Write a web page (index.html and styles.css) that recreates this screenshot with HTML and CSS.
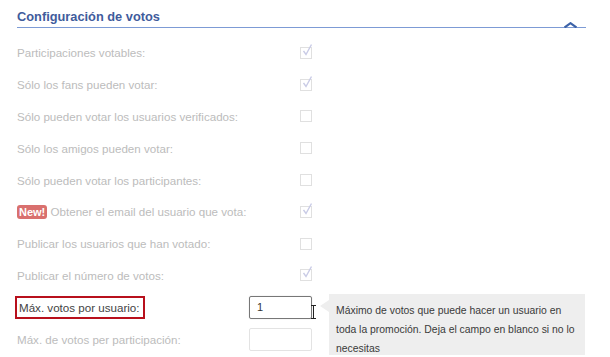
FILE: index.html
```html
<!DOCTYPE html>
<html lang="es">
<head>
    <meta charset="UTF-8">
    <title>Configuración de votos</title>
    <link rel="stylesheet" href="styles.css">
</head>
<body>
    <div class="panel">
        <div class="panel-head">
            <h2 class="panel-title">Configuración de votos</h2>
            <svg class="chevron" width="13" height="6" viewBox="0 0 13 6">
                <path d="M0.5 5.5 L6.5 1.2 L12.5 5.5" fill="none" stroke="#3d63a8" stroke-width="2.2"/>
            </svg>
        </div>

        <div class="rows">
            <div class="row"><span class="label">Participaciones votables:</span><span class="check checked"></span></div>
            <div class="row"><span class="label">Sólo los fans pueden votar:</span><span class="check checked"></span></div>
            <div class="row"><span class="label">Sólo pueden votar los usuarios verificados:</span><span class="check"></span></div>
            <div class="row"><span class="label">Sólo los amigos pueden votar:</span><span class="check"></span></div>
            <div class="row"><span class="label">Sólo pueden votar los participantes:</span><span class="check"></span></div>
            <div class="row"><span class="label"><span class="badge">New!</span> Obtener el email del usuario que vota:</span><span class="check checked"></span></div>
            <div class="row"><span class="label">Publicar los usuarios que han votado:</span><span class="check"></span></div>
            <div class="row"><span class="label">Publicar el número de votos:</span><span class="check checked"></span></div>
            <div class="row">
                <span class="label label-active">Máx. votos por usuario:</span>
                <span class="field field-active">1<span class="caret"></span></span>
                <div class="tip">Máximo de votos que puede hacer un usuario en toda la promoción. Deja el campo en blanco si no lo necesitas</div>
            </div>
            <div class="row"><span class="label">Máx. de votos per participación:</span><span class="field"></span></div>
        </div>
    </div>
</body>
</html>
```

FILE: styles.css
```css
body {
    margin: 0;
    background: #fff;
    font-family: "Liberation Sans", Arial, sans-serif;
}

.panel {
    padding: 9px 0 0 17px;
    width: 570px;
}

.panel-head {
    position: relative;
    border-bottom: 1px solid #7d9bd5;
    width: 569px;
    height: 18px;
}

.panel-title {
    margin: 0;
    font-size: 12.8px;
    font-weight: bold;
    color: #3f5c9c;
    line-height: 16px;
}

.chevron {
    position: absolute;
    right: 9px;
    bottom: -1px;
}

.rows {
    padding-top: 9px;
    width: 295px;
}

.row {
    position: relative;
    display: flex;
    align-items: center;
    justify-content: space-between;
    height: 31.8px;
}

.label {
    font-size: 11.6px;
    color: #bcbcbc;
    white-space: nowrap;
}

.label-active {
    color: #444;
    border: 2px solid #b8101c;
    padding: 3px 3px 3px 2px;
    margin-left: -2px;
}

.badge {
    display: inline-block;
    background: #d9706e;
    color: #fff;
    font-weight: bold;
    font-size: 11px;
    line-height: 14px;
    padding: 0 2px;
    border-radius: 3px;
}

.check {
    position: relative;
    width: 10px;
    height: 10px;
    border: 1px solid #e0e0e0;
}

.checked::after {
    content: "";
    position: absolute;
    left: 2px;
    top: -4px;
    width: 9px;
    height: 12px;
    background: url("data:image/svg+xml;utf8,<svg xmlns='http://www.w3.org/2000/svg' width='9' height='12' viewBox='0 0 9 12'><path d='M0.5 7 L3 10.5 L8.5 0.5' fill='none' stroke='%23c9cbe6' stroke-width='1.4'/></svg>") no-repeat;
}

.field {
    position: relative;
    box-sizing: border-box;
    width: 63px;
    height: 23px;
    border: 1px solid #e3e3e3;
    border-radius: 2px;
    font-size: 11px;
    line-height: 21px;
    padding-left: 7px;
    color: #333;
}

.field-active {
    border-color: #777;
    box-shadow: 0 0 1px #bbb;
}

.caret {
    position: absolute;
    right: -3px;
    top: 8px;
    width: 1px;
    height: 14px;
    background: #222;
}

.caret::before,
.caret::after {
    content: "";
    position: absolute;
    left: -2px;
    width: 5px;
    height: 1px;
    background: #222;
}

.caret::before {
    top: 0;
}

.caret::after {
    bottom: 0;
}

.tip {
    position: absolute;
    left: 312px;
    top: 3px;
    width: 244px;
    padding: 7px 5px 3px 7px;
    background: #eeeeee;
    font-size: 10.4px;
    line-height: 19px;
    color: #3a3a3a;
}

.tip::before {
    content: "";
    position: absolute;
    left: -9px;
    top: 6px;
    border-style: solid;
    border-width: 6px 9px 6px 0;
    border-color: transparent #eeeeee transparent transparent;
}
```
